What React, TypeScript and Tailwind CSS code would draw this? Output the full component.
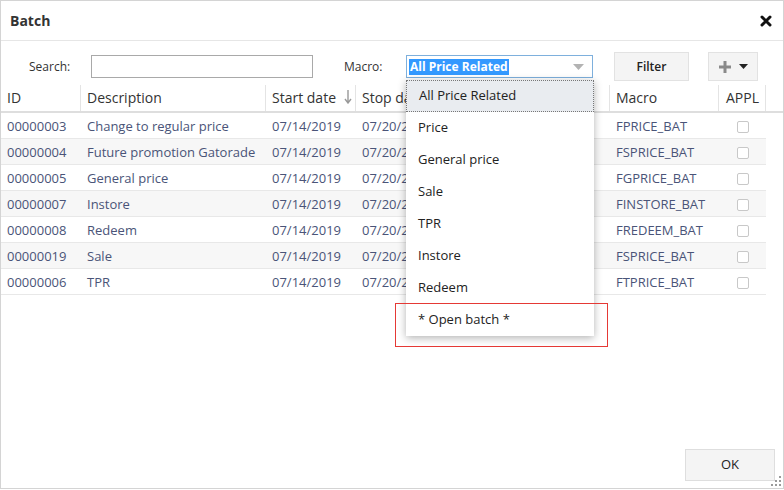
const rows = [
  { id: '00000003', descricao: 'Change to regular price', inicio: '07/14/2019', fim: '07/20/2019', macro: 'FPRICE_BAT' },
  { id: '00000004', descricao: 'Future promotion Gatorade', inicio: '07/14/2019', fim: '07/20/2019', macro: 'FSPRICE_BAT' },
  { id: '00000005', descricao: 'General price', inicio: '07/14/2019', fim: '07/20/2019', macro: 'FGPRICE_BAT' },
  { id: '00000007', descricao: 'Instore', inicio: '07/14/2019', fim: '07/20/2019', macro: 'FINSTORE_BAT' },
  { id: '00000008', descricao: 'Redeem', inicio: '07/14/2019', fim: '07/20/2019', macro: 'FREDEEM_BAT' },
  { id: '00000019', descricao: 'Sale', inicio: '07/14/2019', fim: '07/20/2019', macro: 'FSPRICE_BAT' },
  { id: '00000006', descricao: 'TPR', inicio: '07/14/2019', fim: '07/20/2019', macro: 'FTPRICE_BAT' },
];

const opcoes = ['Price', 'General price', 'Sale', 'TPR', 'Instore', 'Redeem', '* Open batch *'];

const cols = 'grid grid-cols-[80px_185px_90px_254px_109px_47px] w-[765px]';

function App() {
  return (
    <div className="w-[784px] h-[490px] bg-white font-['Open_Sans',sans-serif] text-[#333]">
      <div className="relative w-[784px] h-[489px] border border-[#d4d4d4] flex flex-col">
        {/* titulo */}
        <div className="h-[40px] shrink-0 border-b border-[#e6e6e6] flex items-center justify-between pl-[9px] pr-[11px]">
          <h1 className="text-[14px] font-bold text-[#333]">Batch</h1>
          <svg width="12" height="12" viewBox="0 0 12 12">
            <path d="M2 2 L10 10 M10 2 L2 10" stroke="#111" strokeWidth="3" strokeLinecap="round" />
          </svg>
        </div>

        {/* filtros */}
        <div className="h-[44px] shrink-0 flex items-start pt-[11px] pl-[28px] text-[12px]">
          <div className="h-[29px] flex items-center">
            <span className="w-[62px]">Search:</span>
            <input className="w-[222px] h-[23px] border border-[#a9a9a9] outline-none" />
            <span className="w-[62px] ml-[31px]">Macro:</span>
            <div className="w-[187px] h-[23px] border border-[#7eb0dd] flex items-center justify-between pl-[2px] pr-[8px]">
              <span className="bg-[#3399ff] text-white font-bold text-[12px] leading-[16px] px-[1px]">All Price Related</span>
              <svg width="11" height="6" viewBox="0 0 11 6">
                <path d="M0 0 L11 0 L5.5 6 Z" fill="#b3b3b3" />
              </svg>
            </div>
          </div>
          <button className="ml-[21px] w-[75px] h-[29px] bg-[#f4f4f4] border border-[#e2e2e2] text-[12px] font-semibold text-[#222]">
            Filter
          </button>
          <button className="ml-[19px] w-[50px] h-[29px] bg-[#f4f4f4] border border-[#e2e2e2] flex items-center justify-center gap-[8px]">
            <svg width="12" height="12" viewBox="0 0 12 12">
              <path d="M6 0 V12 M0 6 H12" stroke="#8a8a8a" strokeWidth="3" />
            </svg>
            <svg width="9" height="5" viewBox="0 0 9 5">
              <path d="M0 0 L9 0 L4.5 5 Z" fill="#222" />
            </svg>
          </button>
        </div>

        {/* tabela */}
        <div className="shrink-0 border-b-2 border-[#dedede]">
          <div className={`${cols} h-[26px] text-[14px] text-[#333]`}>
            <div className="border-r border-[#e4e4e4] pl-[6px] pb-[2px] flex items-center">ID</div>
            <div className="border-r border-[#e4e4e4] pl-[6px] pb-[2px] flex items-center">Description</div>
            <div className="border-r border-[#e4e4e4] pl-[6px] pb-[2px] flex items-center justify-between pr-[3px]">
              Start date
              <svg width="8" height="14" viewBox="0 0 8 14">
                <path d="M4 0 V12 M1 9 L4 13 L7 9" stroke="#999" strokeWidth="1.4" fill="none" />
              </svg>
            </div>
            <div className="border-r border-[#e4e4e4] pl-[6px] pb-[2px] flex items-center">Stop date</div>
            <div className="border-r border-[#e4e4e4] pl-[6px] pb-[2px] flex items-center">Macro</div>
            <div className="border-r border-[#e4e4e4] pl-[7px] pb-[2px] flex items-center">APPL</div>
          </div>
        </div>
        <div className="text-[13px] text-[#4a5478]">
          {rows.map((r, i) => (
            <div key={r.id} className={`${cols} h-[26px] pt-[2px] border-b border-[#e8e8e8] ${i % 2 === 1 ? 'bg-[#f7f7f7]' : 'bg-white'}`}>
              <div className="pl-[6px] flex items-center">{r.id}</div>
              <div className="pl-[6px] flex items-center whitespace-nowrap">{r.descricao}</div>
              <div className="pl-[6px] flex items-center">{r.inicio}</div>
              <div className="pl-[6px] flex items-center">{r.fim}</div>
              <div className="pl-[6px] flex items-center">{r.macro}</div>
              <div className="flex items-center justify-center">
                <span className="w-[12px] h-[12px] border border-[#c8c8c8] rounded-[2px] bg-white" />
              </div>
            </div>
          ))}
        </div>

        <div className="flex-1" />

        {/* rodape */}
        <div className="shrink-0 flex justify-end pr-[8px] pb-[7px]">
          <button className="w-[90px] h-[32px] bg-[#f4f4f4] border border-[#dedede] text-[13px] text-[#222]">OK</button>
        </div>

        {/* alça de redimensionar */}
        <svg className="absolute right-[1px] bottom-[1px]" width="12" height="12" viewBox="0 0 12 12">
          <rect x="9" y="1" width="2" height="2" fill="#9a9a9a" />
          <rect x="9" y="5" width="2" height="2" fill="#9a9a9a" />
          <rect x="5" y="5" width="2" height="2" fill="#9a9a9a" />
          <rect x="9" y="9" width="2" height="2" fill="#9a9a9a" />
          <rect x="5" y="9" width="2" height="2" fill="#9a9a9a" />
          <rect x="1" y="9" width="2" height="2" fill="#9a9a9a" />
        </svg>

        {/* lista do select aberta */}
        <ul className="absolute left-[405px] top-[79px] w-[188px] bg-white shadow-[0_2px_8px_rgba(0,0,0,0.3)] text-[13px] text-[#222]">
          <li className="h-[32px] flex items-center pl-[12px] bg-[#e9ecf0] border border-dotted border-[#777]">All Price Related</li>
          {opcoes.map((o) => (
            <li key={o} className="h-[32px] flex items-center pl-[12px]">{o}</li>
          ))}
        </ul>

        {/* destaque vermelho */}
        <div className="absolute left-[394px] top-[302px] w-[213px] h-[44px] border border-[#e53935]" />
      </div>
    </div>
  );
}

export default App;
